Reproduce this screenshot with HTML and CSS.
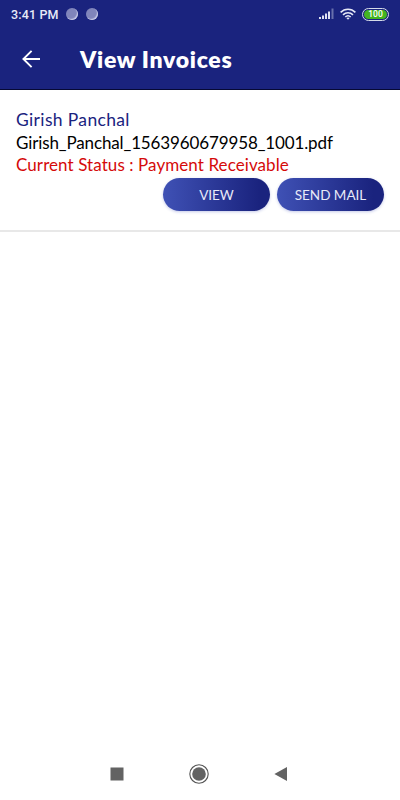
FILE: index.html
```html
<!DOCTYPE html>
<html lang="en">
<head>
    <meta charset="UTF-8">
    <meta name="viewport" content="width=device-width, initial-scale=1.0">
    <title>View Invoices</title>
    <link rel="stylesheet" href="styles.css">
</head>
<body>
    <header class="header">
        <div class="status-bar">
            <span class="time">3:41 PM</span>
            <span class="dot"></span>
            <span class="dot"></span>
            <div class="status-icons">
                <svg class="signal" width="16" height="12" viewBox="0 0 16 12" fill="#dfe1f2">
                    <rect x="0" y="9" width="2" height="2"/>
                    <rect x="3" y="7.5" width="2" height="3.5"/>
                    <rect x="6" y="5.5" width="2" height="5.5"/>
                    <rect x="9" y="3.5" width="2" height="7.5"/>
                    <rect x="12.5" y="0.5" width="2" height="10.5" opacity="0.4"/>
                </svg>
                <svg class="wifi" width="16" height="12" viewBox="0 0 16 12" fill="none" stroke="#e6e8f6" stroke-width="1.6">
                    <path d="M0.6 4.4C4.8 0.2 11.2 0.2 15.4 4.4"/>
                    <path d="M3 6.8C5.9 4 10.1 4 13 6.8"/>
                    <path d="M5.3 9C6.9 7.5 9.1 7.5 10.7 9"/>
                    <path d="M6.4 10L8 11.8L9.6 10Q8 8.9 6.4 10Z" fill="#e6e8f6" stroke="none"/>
                </svg>
                <span class="battery"><span class="battery-level">100</span></span>
            </div>
        </div>
        <div class="toolbar">
            <svg class="back" width="18" height="18" viewBox="0 0 18 18" fill="none" stroke="#fff" stroke-width="1.9">
                <path d="M18 9H1.5M9.6 0.8L1.4 9L9.6 17.2"/>
            </svg>
            <h1>View Invoices</h1>
        </div>
    </header>

    <main class="invoices">
        <div class="invoice">
            <p class="name">Girish Panchal</p>
            <p class="file">Girish_Panchal_1563960679958_1001.pdf</p>
            <p class="status">Current Status : Payment Receivable</p>
            <div class="actions">
                <button class="view">VIEW</button>
                <button class="send">SEND MAIL</button>
            </div>
        </div>
    </main>

    <nav class="nav-bar">
        <svg width="20" height="20" viewBox="0 0 20 20" fill="#636363">
            <rect x="3.5" y="3.5" width="13" height="13"/>
        </svg>
        <svg width="20" height="20" viewBox="0 0 20 20" fill="#636363">
            <circle cx="10" cy="10" r="9.2" fill="none" stroke="#555" stroke-width="1.1"/>
            <circle cx="10" cy="10" r="6.8"/>
        </svg>
        <svg width="20" height="20" viewBox="0 0 20 20" fill="#636363">
            <path d="M3.4 10L16 2.9V17.1Z"/>
        </svg>
    </nav>
</body>
</html>
```
FILE: styles.css
```css
* {
    box-sizing: border-box;
}

body {
    margin: 0;
    height: 100vh;
    display: flex;
    flex-direction: column;
    background: #fff;
    font-family: Lato, sans-serif;
    overflow: hidden;
}

.header {
    height: 90px;
    background: #1a237e;
    border-bottom: 1px solid #060934;
    color: #fff;
}

.status-bar {
    height: 28px;
    display: flex;
    align-items: center;
    padding: 0 11px;
}

.time {
    width: 48px;
    margin-right: 7px;
    font: 500 12.5px Roboto, sans-serif;
    letter-spacing: 0.15px;
    white-space: nowrap;
    color: #e8eaf8;
}

.dot {
    width: 12px;
    height: 12px;
    margin-right: 8px;
    border-radius: 50%;
    background: #8085bb;
    box-shadow: inset -1px -1px 1px #c8cbe8;
}

.status-icons {
    display: flex;
    align-items: center;
    margin-left: auto;
}

.wifi {
    margin: 0 6px 0 5px;
}

.battery {
    width: 27px;
    height: 13px;
    padding: 1px;
    border: 1px solid #d5dbe8;
    border-radius: 7px;
}

.battery-level {
    display: block;
    height: 9px;
    border-radius: 5px;
    background: #43b51f;
    font: 500 8.5px/9px Roboto, sans-serif;
    text-align: center;
}

.toolbar {
    display: flex;
    align-items: center;
    height: 62px;
    padding-left: 22px;
}

h1 {
    margin: 0 0 0 40px;
    font-size: 23px;
    font-weight: 800;
    line-height: 30px;
    letter-spacing: 0.7px;
    white-space: nowrap;
}

.invoices {
    flex: 1;
}

.invoice {
    height: 142px;
    padding: 18px 16px 0;
    border-bottom: 2px solid #e8e8e8;
}

.invoice p {
    margin: 0;
    font-size: 17px;
    line-height: 23px;
    white-space: nowrap;
}

.invoice .name {
    color: #1a237e;
    font-size: 17.5px;
    letter-spacing: 0.35px;
}

.invoice .file {
    color: #000;
    letter-spacing: -0.13px;
}

.invoice .status {
    color: #d50a0a;
    line-height: 22px;
    letter-spacing: 0.08px;
}

.actions {
    display: flex;
    justify-content: flex-end;
    gap: 7px;
    margin-top: 2px;
}

.actions button {
    width: 107px;
    height: 33px;
    padding: 0;
    border: none;
    border-radius: 17px;
    background: linear-gradient(90deg, #3f51b5, #1a237e 90%);
    box-shadow: 0 1px 3px rgba(63, 81, 181, 0.3);
    color: #e8eaf8;
    font-family: inherit;
    font-size: 13.5px;
}

.nav-bar {
    height: 53px;
    display: flex;
    justify-content: center;
    align-items: center;
    gap: 62px;
    padding-right: 2px;
}
```
